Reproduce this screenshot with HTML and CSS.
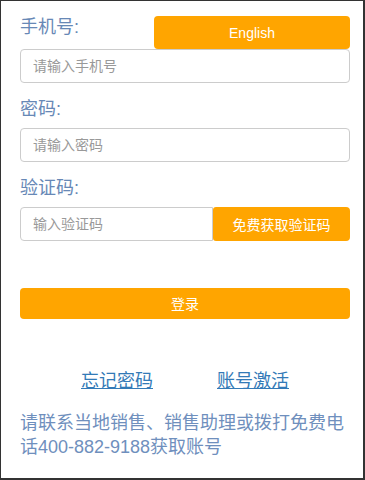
FILE: index.html
```html
<!DOCTYPE html>
<html lang="zh-CN">
<head>
<meta charset="utf-8">
<title>登录</title>
<link rel="stylesheet" href="styles.css">
</head>
<body>
<div class="frame">
  <form class="form">
    <div class="row-top">
      <label class="label">手机号:</label>
      <button type="button" class="btn btn-lang">English</button>
    </div>
    <input class="input" type="text" placeholder="请输入手机号">

    <label class="label label-gap">密码:</label>
    <input class="input input-gap" type="password" placeholder="请输入密码">

    <label class="label label-gap">验证码:</label>
    <div class="code-row input-gap">
      <input class="input input-code" type="text" placeholder="输入验证码">
      <button type="button" class="btn btn-code">免费获取验证码</button>
    </div>

    <button type="button" class="btn btn-login">登录</button>

    <div class="links">
      <a href="#" class="link">忘记密码</a>
      <a href="#" class="link">账号激活</a>
    </div>

    <p class="note">请联系当地销售、销售助理或拨打免费电话400-882-9188获取账号</p>
  </form>
</div>
</body>
</html>
```

FILE: styles.css
```css
* { box-sizing: border-box; }
html, body {
  margin: 0;
  padding: 0;
  background: #ffffff;
}
body {
  font-family: "Liberation Sans", "Noto Sans CJK SC", sans-serif;
}
.frame {
  width: 365px;
  height: 480px;
  border-style: solid;
  border-color: #333333;
  border-width: 1px 2px 2px 1px;
  overflow: hidden;
}
.form {
  display: flex;
  flex-direction: column;
  padding: 14px 13px 0 19px;
}
.row-top {
  display: flex;
  justify-content: space-between;
  align-items: flex-start;
}
.label {
  display: block;
  font-size: 18px;
  line-height: 24px;
  color: #6788b6;
}
.label-gap { margin-top: 14px; }
.input-gap { margin-top: 7px; }
.input {
  display: block;
  width: 100%;
  height: 34px;
  border: 1px solid #cccccc;
  border-radius: 4px;
  padding: 0 12px;
  font-family: "Liberation Sans", "Noto Sans CJK SC", sans-serif;
  font-size: 14px;
  color: #555555;
  background: #ffffff;
  outline: none;
}
.input::placeholder { color: #999999; }
.btn {
  border: none;
  background: #ffa500;
  color: #ffffff;
  font-family: "Liberation Sans", "Noto Sans CJK SC", sans-serif;
  font-size: 14px;
  border-radius: 4px;
  padding: 0;
  cursor: pointer;
}
.btn-lang {
  width: 196px;
  height: 33px;
  margin-top: 1px;
}
.code-row {
  display: flex;
}
.input-code {
  width: 193px;
  flex: 0 0 193px;
  border-radius: 4px 0 0 4px;
}
.btn-code {
  flex: 1;
  height: 34px;
  border-radius: 3px 4px 4px 3px;
}
.btn-login {
  margin-top: 47px;
  height: 31px;
  width: 100%;
  padding-bottom: 2px;
}
.links {
  display: flex;
  justify-content: center;
  gap: 64px;
  margin-top: 50px;
}
.link {
  font-size: 18px;
  line-height: 24px;
  color: #337ab7;
  text-decoration: underline;
}
.note {
  margin: 18px 0 0;
  font-size: 18px;
  line-height: 24px;
  color: #6f8fbd;
}
```
